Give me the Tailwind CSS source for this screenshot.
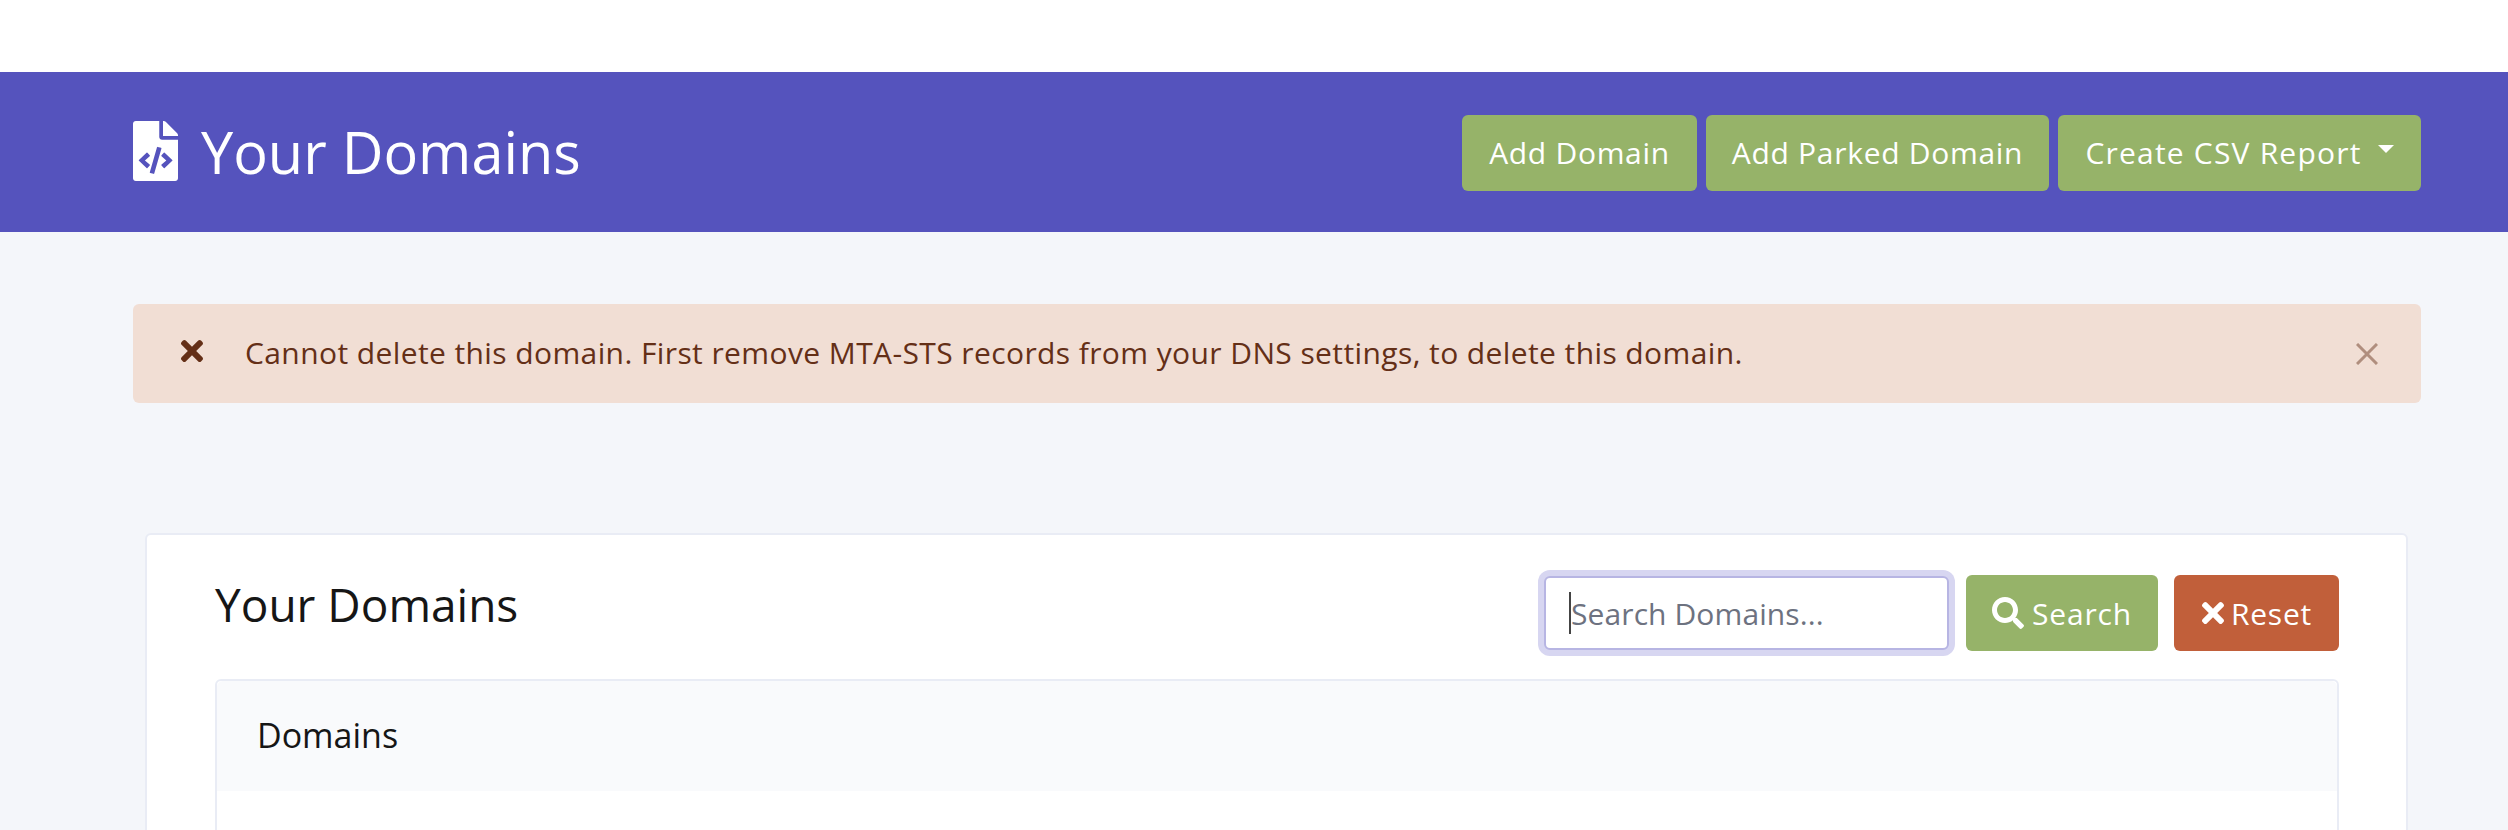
<!DOCTYPE html>
<html><head><meta charset="utf-8"><script src="https://cdn.jsdelivr.net/npm/@tailwindcss/browser@4"></script></head>
<body class="h-[830px] overflow-hidden bg-[#f4f6fa] font-['Open_Sans','Liberation_Sans',sans-serif]">
<div class="h-[72px] bg-white"></div>
<header class="h-[160px] bg-[#5553bd] pl-[133px] pr-[87px] flex items-center justify-between text-white">
  <div class="flex items-center gap-[23px]">
    <svg class="w-[45px] h-[60px] fill-white -mt-[2px]" viewBox="0 0 384 512"><path d="M384 121.941V128H256V0h6.059c6.365 0 12.47 2.529 16.971 7.029l97.941 97.941A24.005 24.005 0 0 1 384 121.941zM248 160c-13.2 0-24-10.8-24-24V0H24C10.745 0 0 10.745 0 24v464c0 13.255 10.745 24 24 24h336c13.255 0 24-10.745 24-24V160H248zM123.206 400.505a5.4 5.4 0 0 1-7.633.246l-64.866-60.812a5.4 5.4 0 0 1 0-7.879l64.866-60.812a5.4 5.4 0 0 1 7.633.246l19.579 20.885a5.4 5.4 0 0 1-.372 7.747L101.65 336l40.763 35.874a5.4 5.4 0 0 1 .372 7.747l-19.579 20.884zm51.295 50.479l-27.453-7.97a5.402 5.402 0 0 1-3.681-6.692l61.44-211.626a5.402 5.402 0 0 1 6.692-3.681l27.452 7.97a5.4 5.4 0 0 1 3.68 6.692l-61.44 211.626a5.397 5.397 0 0 1-6.69 3.681zm160.792-111.045l-64.866 60.812a5.4 5.4 0 0 1-7.633-.246l-19.58-20.885a5.4 5.4 0 0 1 .373-7.747L284.35 336l-40.763-35.874a5.4 5.4 0 0 1-.373-7.747l19.58-20.885a5.4 5.4 0 0 1 7.633-.246l64.866 60.812a5.4 5.4 0 0 1 0 7.879z"/></svg>
    <h1 class="text-[57.6px] leading-none">Your Domains</h1>
  </div>
  <div class="flex gap-[9px] text-[30px] tracking-[0.7px] mt-[2px]">
    <button class="h-[76px] w-[235px] rounded-[6px] bg-[#96b369] pb-[2px]">Add Domain</button>
    <button class="h-[76px] w-[343px] rounded-[6px] bg-[#96b369] pb-[2px]">Add Parked Domain</button>
    <button class="h-[76px] w-[363px] rounded-[6px] bg-[#96b369] pb-[2px] flex items-center justify-center gap-[16px] tracking-[1.2px]">Create CSV Report<span class="w-0 h-0 border-x-[8px] border-t-[8px] border-x-transparent border-t-white -mt-[6px]"></span></button>
  </div>
</header>
<main class="pl-[133px] pr-[87px] pt-[72px]">
  <div class="h-[99px] rounded-[6px] bg-[#f1ded4] text-[#642f17] flex items-center pl-[47px] pr-[43px] text-[30px] tracking-[0.4px]">
    <svg class="w-[24px] h-[32px] fill-[#642f17] -mt-[6px]" viewBox="0 0 352 512"><path d="M242.72 256l100.07-100.07c12.28-12.28 12.28-32.19 0-44.48l-22.24-22.24c-12.28-12.28-32.19-12.28-44.48 0L176 189.28 75.93 89.21c-12.28-12.28-32.19-12.28-44.48 0L9.21 111.45c-12.28 12.28-12.28 32.19 0 44.48L109.28 256 9.21 356.07c-12.28 12.28-12.28 32.19 0 44.48l22.24 22.24c12.28 12.28 32.2 12.28 44.48 0L176 322.72l100.07 100.07c12.28 12.28 32.2 12.28 44.48 0l22.24-22.24c12.28-12.28 12.28-32.19 0-44.48L242.72 256z"/></svg>
    <p class="ml-[41px] flex-1 pb-[2px]">Cannot delete this domain. First remove MTA-STS records from your DNS settings, to delete this domain.</p>
    <svg class="w-[22px] h-[22px] stroke-[#b08e7e] stroke-[3] fill-none" viewBox="0 0 22 22"><path d="M1 1l20 20M21 1L1 21"/></svg>
  </div>
  <section class="ml-[12px] mr-[13px] mt-[130px] h-[400px] bg-white border-2 border-[#e9ecf5] rounded-[6px] pl-[68px] pr-[67px] pt-[39px]">
    <div class="flex justify-between items-start h-[105px]">
      <h2 class="text-[46px] font-medium leading-[60px] text-[#161616]">Your Domains</h2>
      <div class="flex items-center text-[30px] tracking-[0.8px] text-white mt-[1px]">
        <div class="w-[405px] h-[74px] rounded-[6px] bg-white border-2 border-[#b7b5e3] ring-[6px] ring-[#d7d6f1] pl-[23px] flex items-center text-[#6d7280] tracking-[0.1px]"><span class="w-[2px] h-[42px] bg-[#444] shrink-0"></span>Search Domains...</div>
        <button class="ml-[17px] w-[192px] h-[76px] rounded-[6px] bg-[#96b369] flex items-center justify-center gap-[8px]"><svg class="w-[32px] h-[32px] fill-white" viewBox="0 0 512 512"><path d="M505 442.7L405.3 343c-4.5-4.5-10.6-7-17-7H372c27.6-35.3 44-79.7 44-128C416 93.1 322.9 0 208 0S0 93.1 0 208s93.1 208 208 208c48.3 0 92.7-16.4 128-44v16.3c0 6.4 2.5 12.5 7 17l99.7 99.7c9.4 9.4 24.6 9.4 33.9 0l28.3-28.3c9.4-9.4 9.4-24.6.1-34zM208 336c-70.7 0-128-57.2-128-128 0-70.7 57.2-128 128-128 70.7 0 128 57.2 128 128 0 70.7-57.2 128-128 128z"/></svg>Search</button>
        <button class="ml-[16px] w-[165px] h-[76px] rounded-[6px] bg-[#c15f3a] flex items-center justify-center gap-[6px]"><svg class="w-[24px] h-[32px] fill-white" viewBox="0 0 352 512"><path d="M242.72 256l100.07-100.07c12.28-12.28 12.28-32.19 0-44.48l-22.24-22.24c-12.28-12.28-32.19-12.28-44.48 0L176 189.28 75.93 89.21c-12.28-12.28-32.19-12.28-44.48 0L9.21 111.45c-12.28 12.28-12.28 32.19 0 44.48L109.28 256 9.21 356.07c-12.28 12.28-12.28 32.19 0 44.48l22.24 22.24c12.28 12.28 32.2 12.28 44.48 0L176 322.72l100.07 100.07c12.28 12.28 32.2 12.28 44.48 0l22.24-22.24c12.28-12.28 12.28-32.19 0-44.48L242.72 256z"/></svg>Reset</button>
      </div>
    </div>
    <div class="h-[300px] border-2 border-[#e9ecf5] rounded-[6px]">
      <div class="h-[110px] bg-[#f9fafc] rounded-t-[6px] pl-[40px] pb-[2px] flex items-center text-[34px] text-[#161616]">Domains</div>
    </div>
  </section>
</main>
</body></html>
